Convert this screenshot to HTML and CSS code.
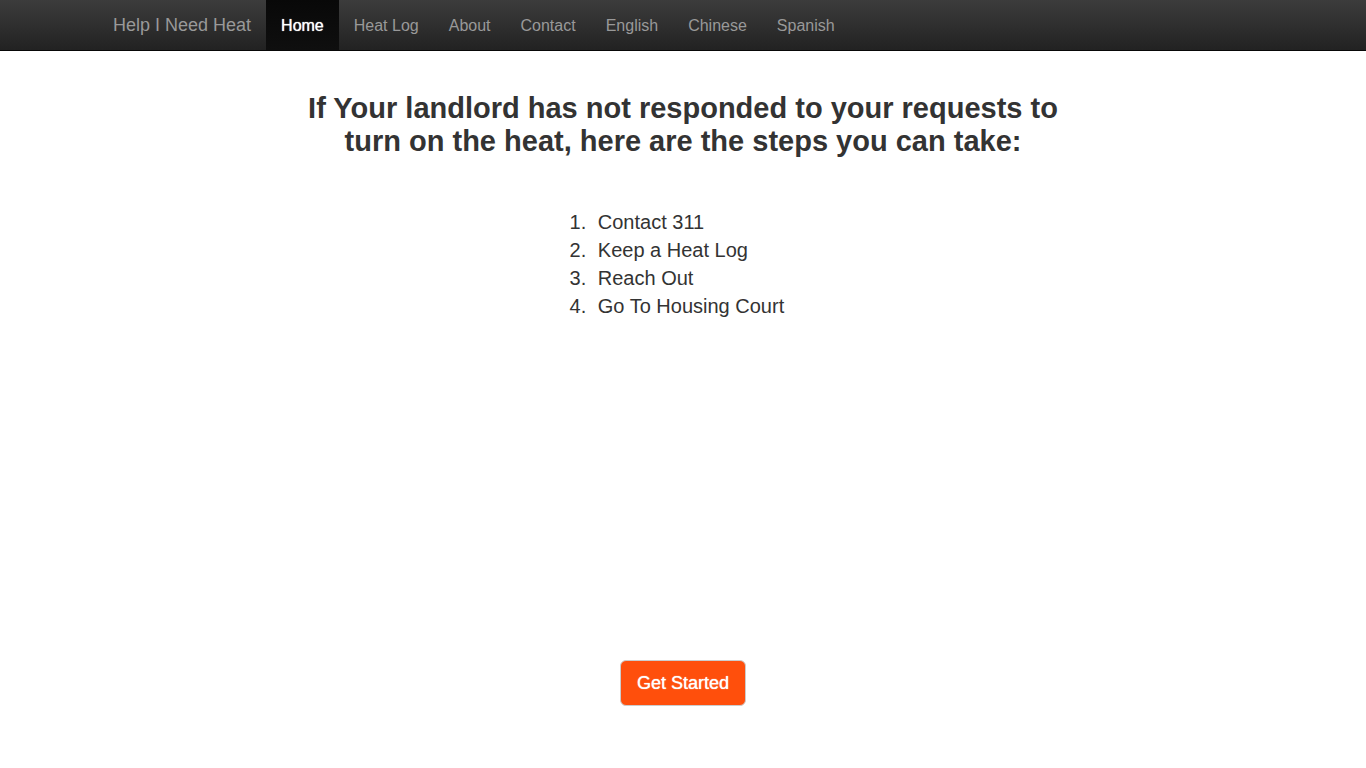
FILE: index.html
```html
<!DOCTYPE html>
<html lang="en">
<head>
<meta charset="utf-8">
<meta name="viewport" content="width=device-width, initial-scale=1">
<title>Help I Need Heat</title>
<link rel="stylesheet" href="styles.css">
</head>
<body>
<header class="navbar">
  <nav class="container">
    <a class="brand" href="#">Help I Need Heat</a>
    <ul class="nav-list">
      <li><a class="nav-link active" href="#" aria-current="page">Home</a></li>
      <li><a class="nav-link" href="#">Heat Log</a></li>
      <li><a class="nav-link" href="#">About</a></li>
      <li><a class="nav-link" href="#">Contact</a></li>
      <li><a class="nav-link" href="#">English</a></li>
      <li><a class="nav-link" href="#">Chinese</a></li>
      <li><a class="nav-link" href="#">Spanish</a></li>
    </ul>
  </nav>
</header>
<main class="content">
  <h1 class="title">If Your landlord has not responded to your requests to turn on the heat, here are the steps you can take:</h1>
  <ol class="steps">
    <li>Contact 311</li>
    <li>Keep a Heat Log</li>
    <li>Reach Out</li>
    <li>Go To Housing Court</li>
  </ol>
  <a class="start" href="#">Get Started</a>
</main>
</body>
</html>
```
FILE: styles.css
```css
* { box-sizing: border-box; }
body {
  margin: 0;
  min-height: 100vh;
  display: flex;
  flex-direction: column;
  background: #fff;
  color: #333;
  font-family: "Helvetica Neue", Helvetica, "Liberation Sans", Arial, sans-serif;
  font-size: 20px;
  line-height: 28px;
}
a { text-decoration: none; }
.navbar {
  background: linear-gradient(#3c3c3c, #222);
  border-bottom: 1px solid #080808;
}
.container {
  display: flex;
  flex-wrap: wrap;
  max-width: 1170px;
  margin: 0 auto;
}
.brand {
  padding: 15px;
  color: #999;
  font-size: 18px;
  line-height: 20px;
}
.nav-list {
  display: flex;
  flex-wrap: wrap;
  margin: 0;
  padding: 0;
  list-style: none;
}
.nav-link {
  display: block;
  padding: 16px 15px 14px;
  color: #999;
  font-size: 16px;
  line-height: 20px;
}
.active {
  background: linear-gradient(#080808, #0f0f0f);
  color: #fff;
  text-shadow: 0 0 1px #fff;
}
.content {
  flex: 1;
  display: flex;
  flex-direction: column;
  align-items: center;
  padding: 41px 16px 62px;
}
.title {
  max-width: 780px;
  margin: 0 0 50px;
  font-size: 29px;
  font-weight: 700;
  line-height: 33px;
  text-align: center;
}
.steps {
  margin: 0;
  padding: 0 10px 0 20px;
}
.steps li { padding-left: 6px; }
.start {
  margin-top: auto;
  padding: 10px 16px;
  border: 1px solid #ccc;
  border-radius: 6px;
  background: #ff4f0c;
  color: #fff;
  font-size: 18px;
  line-height: 24px;
  text-shadow: 0 0 1px #fff;
}
```
